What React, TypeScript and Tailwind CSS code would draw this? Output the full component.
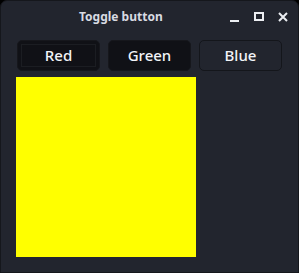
import { useState } from "react";

export default function App() {
  const [on, setOn] = useState<Record<string, boolean>>({ Red: true, Green: true, Blue: false });

  const btn = (name: string) => {
    const active = on[name];
    return (
      <button
        key={name}
        onClick={() => setOn({ ...on, [name]: !active })}
        className={
          "flex h-[31px] w-[83px] items-center justify-center rounded-[5px] border p-[3px] text-[15px] font-medium text-[#f2f4f8] " +
          (active ? "border-[#16171c] bg-[#101116]" : "border-[#14161b] bg-[#22252e]")
        }
      >
        <span
          className={
            "flex h-full w-full items-center justify-center pb-[1px] " +
            (name === "Red" ? "border border-[#1b1d22]" : "")
          }
        >
          {name}
        </span>
      </button>
    );
  };

  const r = on.Red ? 255 : 0;
  const g = on.Green ? 255 : 0;
  const b = on.Blue ? 255 : 0;

  return (
    <div className="h-[273px] w-[299px] bg-black" style={{ fontFamily: '"Noto Sans", sans-serif' }}>
      <div className="flex h-[273px] w-[299px] flex-col rounded-t-[7px] border border-[#15171c] bg-[#22252e]">
        <div className="relative flex h-[32px] items-center">
          <span className="ml-[78px] pb-[1px] text-[12px] font-bold text-[#d8dbe2]">Toggle button</span>
          <div className="ml-auto mr-[10px] flex items-center gap-[14px] text-[#eceef2]">
            <svg width="10" height="10" viewBox="0 0 10 10">
              <rect x="0" y="8" width="9" height="2" fill="currentColor" />
            </svg>
            <svg width="10" height="10" viewBox="0 0 10 10">
              <rect x="1" y="1" width="8" height="7" fill="none" stroke="currentColor" strokeWidth="2" />
            </svg>
            <svg width="10" height="10" viewBox="0 0 10 10">
              <path d="M1 1 L9 9 M9 1 L1 9" stroke="currentColor" strokeWidth="2" />
            </svg>
          </div>
        </div>
        <div className="ml-[16px] mt-[7px] flex gap-[8px]">
          {["Red", "Green", "Blue"].map(btn)}
        </div>
        <div
          className="ml-[15px] mt-[6px] h-[180px] w-[180px]"
          style={{ backgroundColor: `rgb(${r},${g},${b})` }}
        />
      </div>
    </div>
  );
}
